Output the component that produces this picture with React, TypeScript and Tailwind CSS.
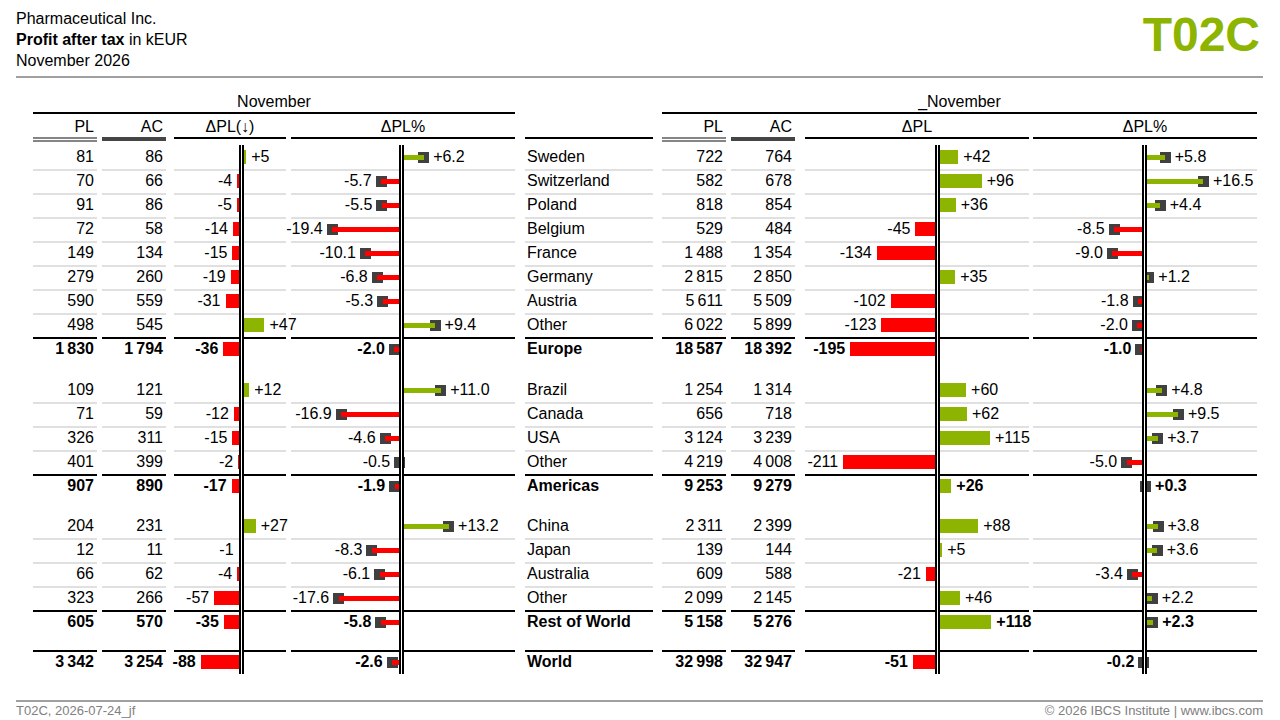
import clsx from "clsx";

const GREEN = "#8cb400";
const RED = "#ff0000";

interface Row {
  name: string;
  plL: string;
  acL: string;
  dL: number;
  dpL: number;
  plR: string;
  acR: string;
  dR: number;
  dpR: number;
  total?: boolean;
}

const r = (
  name: string,
  plL: string,
  acL: string,
  dL: number,
  dpL: number,
  plR: string,
  acR: string,
  dR: number,
  dpR: number,
  total = false
): Row => ({ name, plL, acL, dL, dpL, plR, acR, dR, dpR, total });

const groups: Row[][] = [
  [
    r("Sweden", "81", "86", 5, 6.2, "722", "764", 42, 5.8),
    r("Switzerland", "70", "66", -4, -5.7, "582", "678", 96, 16.5),
    r("Poland", "91", "86", -5, -5.5, "818", "854", 36, 4.4),
    r("Belgium", "72", "58", -14, -19.4, "529", "484", -45, -8.5),
    r("France", "149", "134", -15, -10.1, "1 488", "1 354", -134, -9.0),
    r("Germany", "279", "260", -19, -6.8, "2 815", "2 850", 35, 1.2),
    r("Austria", "590", "559", -31, -5.3, "5 611", "5 509", -102, -1.8),
    r("Other", "498", "545", 47, 9.4, "6 022", "5 899", -123, -2.0),
    r("Europe", "1 830", "1 794", -36, -2.0, "18 587", "18 392", -195, -1.0, true),
  ],
  [
    r("Brazil", "109", "121", 12, 11.0, "1 254", "1 314", 60, 4.8),
    r("Canada", "71", "59", -12, -16.9, "656", "718", 62, 9.5),
    r("USA", "326", "311", -15, -4.6, "3 124", "3 239", 115, 3.7),
    r("Other", "401", "399", -2, -0.5, "4 219", "4 008", -211, -5.0),
    r("Americas", "907", "890", -17, -1.9, "9 253", "9 279", 26, 0.3, true),
  ],
  [
    r("China", "204", "231", 27, 13.2, "2 311", "2 399", 88, 3.8),
    r("Japan", "12", "11", -1, -8.3, "139", "144", 5, 3.6),
    r("Australia", "66", "62", -4, -6.1, "609", "588", -21, -3.4),
    r("Other", "323", "266", -57, -17.6, "2 099", "2 145", 46, 2.2),
    r("Rest of World", "605", "570", -35, -5.8, "5 158", "5 276", 118, 2.3, true),
  ],
  [r("World", "3 342", "3 254", -88, -2.6, "32 998", "32 947", -51, -0.2, true)],
];

// column widths + gaps, measured off the screenshot
const COL = {
  plL: "w-[64px]",
  acL: "ml-[5px] w-[64px]",
  dL: "ml-[8px] w-[112px]",
  dpL: "ml-[5px] w-[224px]",
  name: "ml-[10px] w-[128px]",
  plR: "ml-[9px] w-[64px]",
  acR: "ml-[5px] w-[64px]",
  dR: "ml-[10px] w-[224px]",
  dpR: "ml-[4px] w-[224px]",
};

interface ChartSpec {
  w: number;
  axis: number;
  scale: number;
  pin: boolean;
}

const CH: Record<"dL" | "dpL" | "dR" | "dpR", ChartSpec> = {
  dL: { w: 112, axis: 65, scale: 0.435, pin: false },
  dpL: { w: 224, axis: 108, scale: 3.57, pin: true },
  dR: { w: 224, axis: 130, scale: 0.435, pin: false },
  dpR: { w: 224, axis: 109, scale: 3.57, pin: true },
};

const thin = (s: string) => s.replace(/ /g, "\u2009");
const signed = (v: number, dec: number) => (v > 0 ? "+" : "") + v.toFixed(dec);

function Axis({ left }: { left: number }) {
  return (
    <div
      className="absolute -top-[2px] bottom-0 w-[5px] border-x-2 border-black bg-white"
      style={{ left }}
    />
  );
}

function Chart({ spec, value, bold }: { spec: ChartSpec; value?: number; bold?: boolean }) {
  const zero = spec.axis + 2.5;
  if (value === undefined) return <Axis left={spec.axis} />;
  const pos = value >= 0;
  const color = pos ? GREEN : RED;
  const label = signed(value, spec.pin ? 1 : 0);

  if (spec.pin) {
    const x = zero + value * spec.scale;
    const lo = Math.min(zero, x);
    const len = Math.max(Math.abs(x - zero), 1);
    const edge = pos ? x + 9.5 : x - 9.5;
    return (
      <>
        <div className="absolute top-[5px] h-[11px] w-[11px] bg-[#404040]" style={{ left: x - 5.5 }} />
        <div className="absolute top-[8px] h-[5px]" style={{ left: lo, width: len, background: color }} />
        <span
          className={clsx("absolute top-0 whitespace-nowrap leading-[20px]", bold && "font-bold")}
          style={pos ? { left: edge } : { right: spec.w - edge }}
        >
          {label}
        </span>
        <Axis left={spec.axis} />
      </>
    );
  }

  // bars grow out of the axis' outer edge
  const len = Math.abs(value) * spec.scale;
  const start = pos ? zero : zero - 2.5 - len;
  const width = len + 2.5;
  const edge = pos ? zero + 2.5 + len + 5 : zero - 2.5 - len - 5;
  return (
    <>
      <div className="absolute top-[3px] h-[14px]" style={{ left: start, width, background: color }} />
      <span
        className={clsx("absolute top-0 whitespace-nowrap leading-[20px]", bold && "font-bold")}
        style={pos ? { left: edge } : { right: spec.w - edge }}
      >
        {label}
      </span>
      <Axis left={spec.axis} />
    </>
  );
}

function DataRow({ row, first, gap }: { row?: Row; first?: boolean; gap?: string }) {
  const spacer = !row;
  const line = spacer || (first && !row?.total)
    ? "border-transparent"
    : row?.total
      ? "border-black"
      : "border-[#e0e0e0]";
  const cell = clsx("relative border-t-2", spacer ? gap : "h-[24px] pb-[2px]", line);
  const num = clsx(cell, "flex items-center justify-end pr-[3px] leading-[20px]", row?.total && "font-bold");

  return (
    <div className="flex">
      <div className={clsx(COL.plL, num)}>{row && thin(row.plL)}</div>
      <div className={clsx(COL.acL, num)}>{row && thin(row.acL)}</div>
      <div className={clsx(COL.dL, cell)}>
        <Chart spec={CH.dL} value={row?.dL} bold={row?.total} />
      </div>
      <div className={clsx(COL.dpL, cell)}>
        <Chart spec={CH.dpL} value={row?.dpL} bold={row?.total} />
      </div>
      <div className={clsx(COL.name, cell, "flex items-center pl-[2px] leading-[20px]", row?.total && "font-bold")}>
        {row?.name}
      </div>
      <div className={clsx(COL.plR, num)}>{row && thin(row.plR)}</div>
      <div className={clsx(COL.acR, num)}>{row && thin(row.acR)}</div>
      <div className={clsx(COL.dR, cell)}>
        <Chart spec={CH.dR} value={row?.dR} bold={row?.total} />
      </div>
      <div className={clsx(COL.dpR, cell)}>
        <Chart spec={CH.dpR} value={row?.dpR} bold={row?.total} />
      </div>
    </div>
  );
}

function HeadCell({ col, label, line, right }: { col: string; label?: string; line: "pl" | "ac" | "bar"; right?: boolean }) {
  return (
    <div className={clsx(col, "flex h-[31px] flex-col pt-[3px]")}>
      <div className={clsx("h-[20px] leading-[20px]", right ? "pr-[3px] text-right" : "text-center")}>{label}</div>
      {line === "pl" && <div className="h-[5px] border-y-2 border-[#858585]" />}
      {line === "ac" && <div className="h-[4px] bg-[#454545]" />}
      {line === "bar" && <div className="h-[2px] bg-black" />}
    </div>
  );
}

const SPACERS = ["h-[17px]", "h-[16px]", "h-[16px]"];

export default function App() {
  return (
    <div className="flex h-[720px] flex-col overflow-hidden bg-white font-['Liberation_Sans',Arial,sans-serif] text-[16px] text-black">
      {/* title */}
      <div className="flex h-[76px] justify-between pl-[16px] pr-[20px]">
        <div className="pt-[8px] leading-[21px]">
          <div>Pharmaceutical Inc.</div>
          <div>
            <span className="font-bold">Profit after tax</span> in kEUR
          </div>
          <div>November 2026</div>
        </div>
        <div className="pt-[11px] text-[48px] font-bold leading-none text-[#8cb400]">T02C</div>
      </div>
      <div className="ml-[16px] mr-[17px] h-[2px] bg-[#a0a0a0]" />

      {/* table */}
      <div className="pl-[33px]">
        <div className="flex">
          <div className="flex w-[482px] flex-col pt-[14px]">
            <div className="h-[20px] text-center leading-[20px]">November</div>
            <div className="h-[2px] bg-black" />
          </div>
          <div className="ml-[10px] w-[128px]" />
          <div className="ml-[9px] flex w-[595px] flex-col pt-[14px]">
            <div className="h-[20px] text-center leading-[20px]">_November</div>
            <div className="h-[2px] bg-black" />
          </div>
        </div>

        <div className="flex">
          <HeadCell col={COL.plL} label="PL" line="pl" right />
          <HeadCell col={COL.acL} label="AC" line="ac" right />
          <HeadCell col={COL.dL} label="ΔPL(↓)" line="bar" />
          <HeadCell col={COL.dpL} label="ΔPL%" line="bar" />
          <HeadCell col={COL.name} line="bar" />
          <HeadCell col={COL.plR} label="PL" line="pl" right />
          <HeadCell col={COL.acR} label="AC" line="ac" right />
          <HeadCell col={COL.dR} label="ΔPL" line="bar" />
          <HeadCell col={COL.dpR} label="ΔPL%" line="bar" />
        </div>

        {groups.map((g, gi) => (
          <div key={gi}>
            {gi > 0 && <DataRow gap={SPACERS[gi - 1]} />}
            {g.map((row, ri) => (
              <DataRow key={ri} row={row} first={ri === 0} />
            ))}
          </div>
        ))}
      </div>

      {/* footer */}
      <div className="mt-auto">
        <div className="ml-[16px] mr-[17px] h-[2px] bg-[#a0a0a0]" />
        <div className="flex h-[18px] justify-between pl-[16px] pr-[17px] text-[13px] leading-[18px] text-[#808080]">
          <span>T02C, 2026-07-24_jf</span>
          <span>© 2026 IBCS Institute | www.ibcs.com</span>
        </div>
      </div>
    </div>
  );
}
